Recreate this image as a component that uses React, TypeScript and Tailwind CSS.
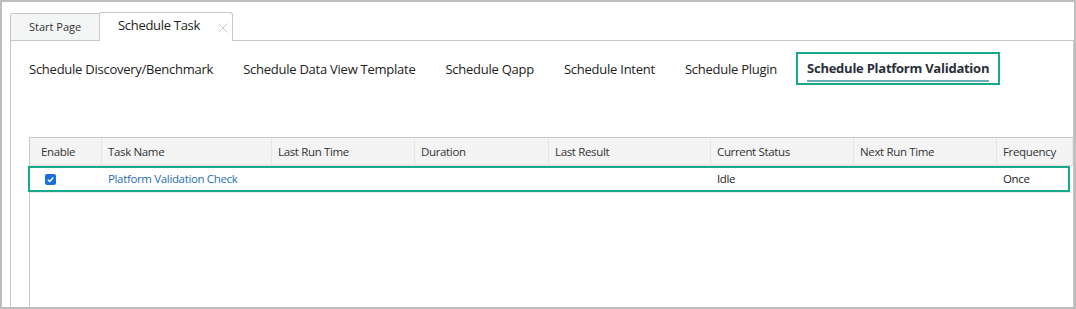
const subTabs = [
  "Schedule Discovery/Benchmark",
  "Schedule Data View Template",
  "Schedule Qapp",
  "Schedule Intent",
  "Schedule Plugin",
  "Schedule Platform Validation",
];

const columns = [
  "Enable",
  "Task Name",
  "Last Run Time",
  "Duration",
  "Last Result",
  "Current Status",
  "Next Run Time",
  "Frequency",
];

const grid = "grid grid-cols-[72px_170px_143px_134px_162px_143px_143px_1fr]";

export default function App() {
  return (
    <div
      className="w-[1076px] h-[309px] border-2 border-[#bdbdbd] bg-white flex flex-col pt-[10px] pl-[8px] text-[#222]"
      style={{ fontFamily: '"Open Sans", "Noto Sans", sans-serif' }}
    >
      {/* top tabs */}
      <div className="flex items-end h-[28px]">
        <div className="w-[90px] h-[27px] border border-b-0 border-[#c8c8c8] rounded-tl-[2px] bg-[#f4f6f6] flex items-center pl-[18px] text-[11px] text-[#333]">
          Start Page
        </div>
        <div className="relative z-10 -mb-px w-[133px] h-[29px] border border-b-0 border-l-0 border-[#c8c8c8] rounded-tr-[3px] bg-white flex items-center pl-[18px] pb-[2px] text-[13px] tracking-[-0.3px]">
          Schedule Task
          <svg className="absolute left-[118px] top-[10px]" width="10" height="10" viewBox="0 0 10 10">
            <path d="M0.5 0.5 L9.5 9.5 M9.5 0.5 L0.5 9.5" stroke="#cdcdcd" strokeWidth="1" fill="none" />
          </svg>
        </div>
      </div>

      {/* panel */}
      <div className="flex-1 border-l border-t border-r border-[#c8c8c8] flex flex-col pl-[7px]">
        <div className="flex items-center gap-[8px] mt-[11px] h-[33px] text-[13px] tracking-[-0.25px]">
          {subTabs.map((t, i) =>
            i === subTabs.length - 1 ? (
              <div
                key={t}
                className="h-[33px] border-2 border-[#16a98b] px-[9px] flex flex-col items-start pt-[5px]"
              >
                <span className="font-bold leading-[18px] text-[#2a2f3a]">{t}</span>
                <span className="mt-[3px] h-[2px] w-full bg-[#6aaebd]" />
              </div>
            ) : (
              <div key={t} className="border-2 border-transparent px-[9px] leading-[18px]">
                {t}
              </div>
            )
          )}
        </div>

        {/* table */}
        <div className="flex-1 mt-[52px] ml-[11px] border-l border-[#c8c8c8] flex flex-col text-[11.5px] tracking-[-0.35px]">
          <div className={`${grid} h-[29px] bg-[#f4f4f4] border-t border-b border-t-[#c8c8c8] border-b-[#dedede]`}>
            {columns.map((c, i) => (
              <div
                key={c}
                className={`flex items-center border-r border-[#e6e6e6] text-[#333] ${
                  i === 0 ? "pl-[11px]" : "pl-[6px]"
                }`}
              >
                {c}
              </div>
            ))}
          </div>

          <div className={`relative ${grid} h-[27px] border-b border-[#ececec]`}>
            <div className="flex items-center pl-[15px]">
              <span className="w-[11px] h-[11px] rounded-[2px] bg-[#1a6fe0] flex items-center justify-center">
                <svg width="9" height="9" viewBox="0 0 10 10">
                  <path d="M2 5.2 L4.2 7.3 L8 2.8" fill="none" stroke="white" strokeWidth="1.6" />
                </svg>
              </span>
            </div>
            <div className="flex items-center pl-[6px] text-[#2a70b5]">Platform Validation Check</div>
            <div />
            <div />
            <div />
            <div className="flex items-center pl-[6px]">Idle</div>
            <div />
            <div className="flex items-center pl-[6px]">Once</div>
            <div className="absolute left-[-2px] top-0 right-[3px] h-[26px] border-2 border-[#16a98b]" />
          </div>
        </div>
      </div>
    </div>
  );
}
